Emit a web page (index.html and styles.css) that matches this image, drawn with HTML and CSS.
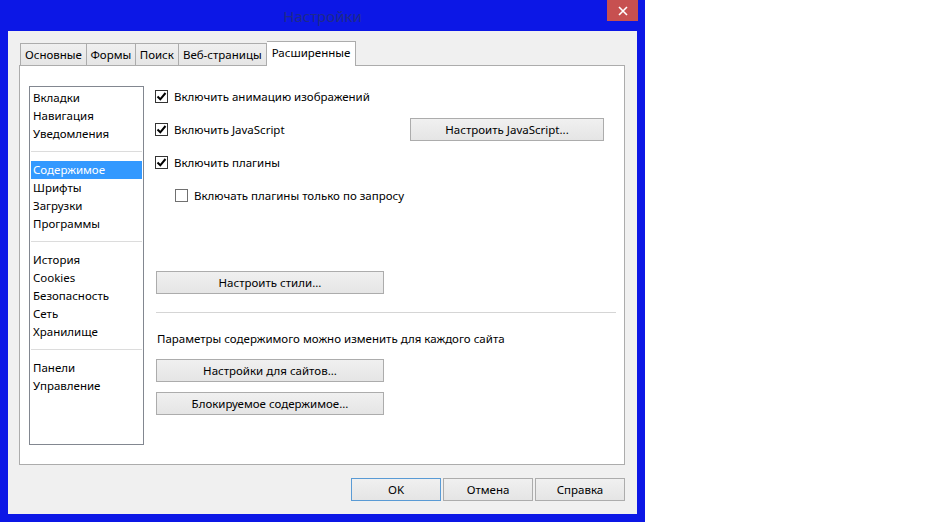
FILE: index.html
```html
<!DOCTYPE html>
<html lang="ru">
<head>
    <meta charset="UTF-8">
    <title>Настройки</title>
    <link rel="stylesheet" href="styles.css">
</head>
<body>
    <div class="window">
        <div class="titlebar">
            <span class="title">Настройки</span>
            <button class="close" title="Закрыть">
                <svg width="10" height="10" viewBox="0 0 10 10"><path d="M1 1 L9 9 M9 1 L1 9" stroke="#fff" stroke-width="1.6"/></svg>
            </button>
        </div>
        <div class="client">
            <div class="tabs">
                <div class="tab">Основные</div>
                <div class="tab narrow">Формы</div>
                <div class="tab">Поиск</div>
                <div class="tab">Веб-страницы</div>
                <div class="tab selected">Расширенные</div>
            </div>
            <div class="panel">
                <ul class="nav">
                    <li>Вкладки</li>
                    <li>Навигация</li>
                    <li>Уведомления</li>
                    <li class="sep"></li>
                    <li class="selected">Содержимое</li>
                    <li>Шрифты</li>
                    <li>Загрузки</li>
                    <li>Программы</li>
                    <li class="sep"></li>
                    <li>История</li>
                    <li>Cookies</li>
                    <li>Безопасность</li>
                    <li>Сеть</li>
                    <li>Хранилище</li>
                    <li class="sep"></li>
                    <li>Панели</li>
                    <li>Управление</li>
                </ul>
                <div class="content">
                    <div class="option">
                        <span class="box checked"><svg width="11" height="11" viewBox="0 0 11 11"><path d="M1.5 5.5 L4.3 8.3 L9.5 2" fill="none" stroke="#000" stroke-width="2"/></svg></span>
                        Включить анимацию изображений
                    </div>
                    <div class="option">
                        <span class="box checked"><svg width="11" height="11" viewBox="0 0 11 11"><path d="M1.5 5.5 L4.3 8.3 L9.5 2" fill="none" stroke="#000" stroke-width="2"/></svg></span>
                        Включить JavaScript
                        <button class="btn js-btn">Настроить JavaScript...</button>
                    </div>
                    <div class="option">
                        <span class="box checked"><svg width="11" height="11" viewBox="0 0 11 11"><path d="M1.5 5.5 L4.3 8.3 L9.5 2" fill="none" stroke="#000" stroke-width="2"/></svg></span>
                        Включить плагины
                    </div>
                    <div class="option sub">
                        <span class="box"></span>
                        Включать плагины только по запросу
                    </div>
                    <button class="btn wide styles-btn">Настроить стили...</button>
                    <hr class="divider">
                    <p class="note">Параметры содержимого можно изменить для каждого сайта</p>
                    <button class="btn wide sites-btn">Настройки для сайтов...</button>
                    <button class="btn wide blocked-btn">Блокируемое содержимое...</button>
                </div>
            </div>
            <div class="footer">
                <button class="btn dlg default">OK</button>
                <button class="btn dlg">Отмена</button>
                <button class="btn dlg">Справка</button>
            </div>
        </div>
    </div>
</body>
</html>
```

FILE: styles.css
```css
body {
    margin: 0;
    background: white;
    font-family: "Noto Sans", "Open Sans", Arial, sans-serif;
    font-size: 11.5px;
    color: #000;
}
.window {
    width: 645px;
    height: 522px;
    background: #0c17e6;
    padding: 0 8px 8px 8px;
    box-sizing: border-box;
    display: flex;
    flex-direction: column;
}
.titlebar {
    height: 31px;
    display: flex;
    justify-content: center;
    align-items: center;
    position: relative;
}
.title {
    font-size: 15px;
    color: #1e2a8c;
    padding-top: 1px;
}
.close {
    position: absolute;
    top: 0;
    right: -1px;
    width: 31px;
    height: 21px;
    border: none;
    background: #c75050;
    display: flex;
    align-items: center;
    justify-content: center;
    padding: 0;
}
.client {
    flex: 1;
    background: #f0f0f0;
    padding: 11px 12px 0 11px;
    display: flex;
    flex-direction: column;
}
.tabs {
    display: flex;
    align-items: flex-end;
    padding-left: 1px;
    height: 24px;
    position: relative;
    z-index: 1;
    margin-bottom: -1px;
}
.tab {
    height: 21px;
    line-height: 21px;
    padding: 0 4px;
    border: 1px solid #acacac;
    border-bottom: none;
    border-right: none;
    background: linear-gradient(#f0f0f0, #e5e5e5);
    margin-bottom: 1px;
}
.tab.narrow {
    padding: 0 3.5px;
}
.tab:nth-child(4) {
    border-right: 1px solid #acacac;
}
.tab.selected {
    height: 24px;
    line-height: 22px;
    padding: 0 5px;
    background: white;
    border-right: 1px solid #acacac;
    border-left: none;
    margin-bottom: 0;
}
.panel {
    height: 400px;
    box-sizing: border-box;
    background: white;
    border: 1px solid #acacac;
    padding: 20px 8px 0 9px;
    display: flex;
}
.nav {
    list-style: none;
    margin: 0;
    padding: 2px 1px;
    width: 115px;
    height: 359px;
    box-sizing: border-box;
    border: 1px solid #828790;
    flex-shrink: 0;
}
.nav li {
    height: 18px;
    line-height: 18px;
    padding-left: 2px;
}
.nav li.selected {
    background: #3399ff;
    color: white;
}
.nav li.sep {
    height: 18px;
    position: relative;
}
.nav li.sep::after {
    content: "";
    position: absolute;
    left: 0;
    right: 0;
    top: 8px;
    border-top: 1px solid #dcdcdc;
}
.content {
    flex: 1;
    margin-left: 11px;
    margin-top: -1px;
    display: flex;
    flex-direction: column;
    align-items: flex-start;
}
.option {
    height: 22px;
    margin-bottom: 11px;
    display: flex;
    align-items: center;
    gap: 6px;
    align-self: stretch;
}
.option.sub {
    padding-left: 20px;
}
.box {
    width: 13px;
    height: 13px;
    box-sizing: border-box;
    border: 1px solid #333;
    background: white;
    display: flex;
    align-items: center;
    justify-content: center;
}
.option.sub .box {
    border-color: #707070;
}
.btn {
    font: inherit;
    color: #000;
    height: 23px;
    border: 1px solid #acacac;
    background: linear-gradient(#f0f0f0, #e5e5e5);
    padding: 0;
}
.js-btn {
    width: 194px;
    margin-left: auto;
    margin-right: 12px;
}
.wide {
    width: 228px;
    margin-left: 1px;
}
.styles-btn {
    margin-top: 54px;
}
.divider {
    align-self: stretch;
    margin: 18px 0 0 1px;
    border: none;
    border-top: 1px solid #d5d5d5;
    height: 0;
}
.note {
    margin: 17px 0 0 2px;
    line-height: 17px;
}
.sites-btn {
    margin-top: 12px;
}
.blocked-btn {
    margin-top: 10px;
}
.footer {
    display: flex;
    justify-content: flex-end;
    gap: 2px;
    padding-top: 13px;
}
.dlg {
    width: 90px;
}
.dlg.default {
    border-color: #5a9bd5;
}
```
